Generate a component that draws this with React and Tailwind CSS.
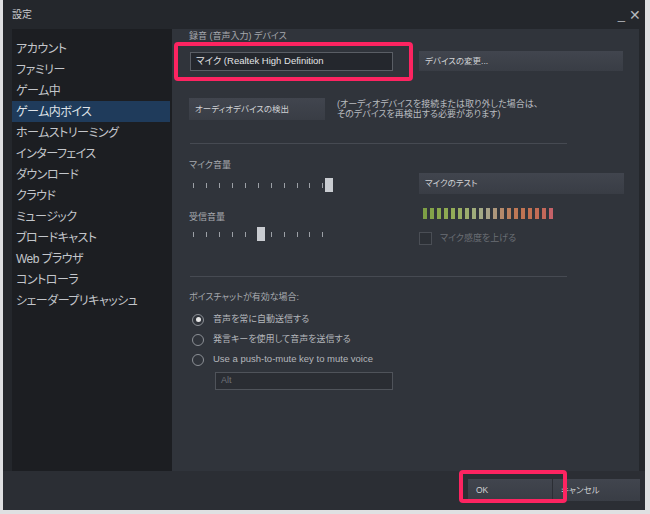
import React from "react";

const SIDEBAR = [
  "アカウント",
  "ファミリー",
  "ゲーム中",
  "ゲーム内ボイス",
  "ホームストリーミング",
  "インターフェイス",
  "ダウンロード",
  "クラウド",
  "ミュージック",
  "ブロードキャスト",
  "Web ブラウザ",
  "コントローラ",
  "シェーダープリキャッシュ",
];

const METER = [
  "#7d9f45", "#83a349", "#89a74d", "#8eaa52", "#93ac58", "#98ad62", "#9cad6e",
  "#9fac7b", "#a3a986", "#a7a288", "#ad977c", "#b5896a", "#bb7f5d", "#bf7856",
  "#c17453", "#c27052", "#c36c55", "#c3685a", "#c56268",
];

const Slider = ({ thumbClass }) => (
  <div className="relative ml-[4px] h-[16px] w-[150px]">
    <div className="flex h-full items-center">
      {Array.from({ length: 11 }).map((_, i) => (
        <div key={i} className="w-[12.95px] flex items-center">
          <div className="h-[5px] w-px bg-[#9ca0a6]" />
        </div>
      ))}
    </div>
    <div className={`absolute top-[1px] h-[14px] w-[8px] bg-[#c9ccd1] ${thumbClass}`} />
  </div>
);

const Radio = ({ checked, className = "text-[9px]", children }) => (
  <div className="flex h-[14px] items-center">
    <div className="ml-[3px] flex h-[12px] w-[12px] items-center justify-center rounded-full border-[1.5px] border-[#8b8f95]">
      {checked && <div className="h-[5px] w-[5px] rounded-full bg-[#e8e8e8]" />}
    </div>
    <span className={`ml-[9px] text-[#b4b7bc] ${className}`}>{children}</span>
  </div>
);

const Button = ({ className = "", children }) => (
  <div
    className={`flex items-center bg-gradient-to-b from-[#41454e] to-[#393d45] pl-[6px] text-[8.5px] text-[#d0d2d5] ${className}`}
  >
    {children}
  </div>
);

export default function App() {
  return (
    <div className="relative h-[514px] w-[650px] overflow-hidden bg-[#dfe0e2] font-['Liberation_Sans','Noto_Sans_CJK_JP',sans-serif] [font-feature-settings:'palt']">
      <div className="ml-[3px] flex h-[510px] w-[642px] flex-col bg-[#24272c]">
        {/* title bar */}
        <div className="flex h-[29px] items-center justify-between pl-[9px] pr-[4px]">
          <span className="text-[10px] text-[#c9cbce]">設定</span>
          <div className="flex items-center gap-[4px] text-[#b5b8bd]">
            <span className="text-[13px] leading-none">_</span>
            <span className="text-[14px] leading-none">✕</span>
          </div>
        </div>

        {/* body */}
        <div className="flex h-[442px] pl-[9px]">
          <div className="w-[160px] bg-[#1c1e22] pt-[9px]">
            {SIDEBAR.map((item) => (
              <div
                key={item}
                className={`flex h-[21px] items-center pl-[4px] text-[12px] tracking-[-0.5px] ${
                  item === "ゲーム内ボイス"
                    ? "mr-[2px] bg-[#1f3b5b] text-[#dfe3e8]"
                    : "text-[#c3c6cb]"
                }`}
              >
                {item}
              </div>
            ))}
          </div>

          <div className="w-[467px] bg-[#30343b] pl-[17px] pt-[1px]">
            <div className="text-[9px] leading-[12px] text-[#a6a9ae]">
              録音 (音声入力) デバイス
            </div>

            <div className="mt-[9px] flex items-center">
              <div className="ml-[1px] flex h-[19px] w-[203px] items-center border border-[#5a5e65] bg-[#24272d] pl-[5px] text-[9.5px] text-[#e2e3e5]">
                マイク (Realtek High Definition
              </div>
              <Button className="ml-[26px] h-[20px] w-[204px]">デバイスの変更...</Button>
            </div>

            <div className="mt-[27px] flex items-center">
              <Button className="h-[22px] w-[136px]">オーディオデバイスの検出</Button>
              <div className="ml-[12px] text-[9px] leading-[10px] text-[#b9bcc0]">
                (オーディオデバイスを接続または取り外した場合は、
                <br />
                そのデバイスを再検出する必要があります)
              </div>
            </div>

            <div className="ml-[1px] mt-[23px] h-px w-[377px] bg-[#464a52]" />

            <div className="mt-[15px] flex items-start">
              <div className="w-[230px]">
                <div className="text-[9px] leading-[12px] text-[#a6a9ae]">マイク音量</div>
                <div className="mt-[6px]">
                  <Slider thumbClass="left-[132px]" />
                </div>
                <div className="mt-[18px] text-[9px] leading-[12px] text-[#a6a9ae]">受信音量</div>
                <div className="mt-[3px]">
                  <Slider thumbClass="left-[64px]" />
                </div>
              </div>

              <div className="mt-[14px]">
                <Button className="h-[21px] w-[205px]">マイクのテスト</Button>
                <div className="ml-[4px] mt-[14px] flex h-[11px] gap-[3px]">
                  {METER.map((c, i) => (
                    <div key={i} className="h-full w-[4px]" style={{ backgroundColor: c }} />
                  ))}
                </div>
                <div className="mt-[13px] flex items-center">
                  <div className="h-[13px] w-[13px] border border-[#4a4e55] bg-[#2c3036]" />
                  <span className="ml-[8px] text-[9px] text-[#6b6f75]">マイク感度を上げる</span>
                </div>
              </div>
            </div>

            <div className="ml-[1px] mt-[30px] h-px w-[377px] bg-[#464a52]" />

            <div className="mt-[14px] text-[9px] leading-[12px] text-[#a6a9ae]">
              ボイスチャットが有効な場合:
            </div>
            <div className="mt-[10px] flex flex-col gap-[6px]">
              <Radio checked>音声を常に自動送信する</Radio>
              <Radio>発言キーを使用して音声を送信する</Radio>
              <Radio className="text-[9.5px]">Use a push-to-mute key to mute voice</Radio>
            </div>
            <div className="ml-[26px] mt-[5px] flex h-[18px] w-[178px] items-center border border-[#4f535a] bg-[#2a2d33] pl-[5px] text-[9px] text-[#6e7278]">
              Alt
            </div>
          </div>

          <div className="w-[6px] bg-[#24272c]" />
        </div>

        {/* bottom bar */}
        <div className="flex h-[39px] justify-end bg-[#2b2e34] pr-[5px] pt-[8px]">
          <Button className="h-[22px] w-[84px] pl-[8px]">OK</Button>
          <Button className="h-[22px] w-[88px] border-l border-[#2b2e34] pl-[8px]">キャンセル</Button>
        </div>
      </div>

      {/* red highlight frames */}
      <div className="absolute left-[174px] top-[42px] h-[39px] w-[239px] rounded-[4px] border-[4px] border-[#fd2461]" />
      <div className="absolute left-[459px] top-[470px] h-[33px] w-[108px] rounded-[4px] border-[4px] border-[#fd2461]" />
    </div>
  );
}
